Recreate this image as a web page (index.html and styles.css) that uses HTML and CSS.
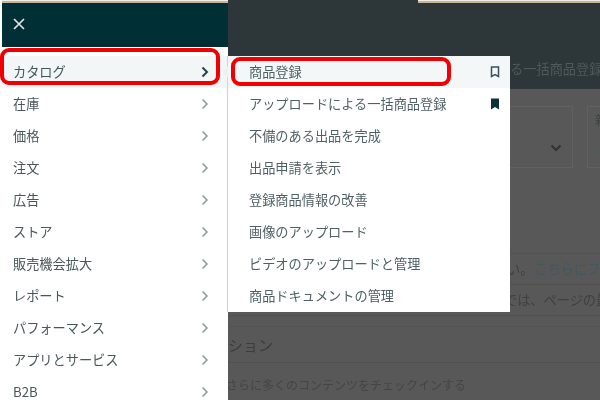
FILE: index.html
```html
<!DOCTYPE html>
<html lang="ja">
<head>
<meta charset="utf-8">
<title>カタログ</title>
<link rel="stylesheet" href="styles.css">
</head>
<body>
<div class="stage">
  <nav class="nav">
    <div class="strip"></div>
    <div class="nav-head">
      <svg class="close" width="12" height="12" viewBox="0 0 12 12"><path d="M1 1l10 10M11 1L1 11"/></svg>
    </div>
    <ul class="menu">
      <li class="row active">カタログ<svg class="chev" width="8" height="12" viewBox="0 0 8 12"><path d="M1.500 1.500L6 6l-4.500 4.500"/></svg></li>
      <li class="row">在庫<svg class="chev" width="8" height="12" viewBox="0 0 8 12"><path d="M1.500 1.500L6 6l-4.500 4.500"/></svg></li>
      <li class="row">価格<svg class="chev" width="8" height="12" viewBox="0 0 8 12"><path d="M1.500 1.500L6 6l-4.500 4.500"/></svg></li>
      <li class="row">注文<svg class="chev" width="8" height="12" viewBox="0 0 8 12"><path d="M1.500 1.500L6 6l-4.500 4.500"/></svg></li>
      <li class="row">広告<svg class="chev" width="8" height="12" viewBox="0 0 8 12"><path d="M1.500 1.500L6 6l-4.500 4.500"/></svg></li>
      <li class="row">ストア<svg class="chev" width="8" height="12" viewBox="0 0 8 12"><path d="M1.500 1.500L6 6l-4.500 4.500"/></svg></li>
      <li class="row">販売機会拡大<svg class="chev" width="8" height="12" viewBox="0 0 8 12"><path d="M1.500 1.500L6 6l-4.500 4.500"/></svg></li>
      <li class="row">レポート<svg class="chev" width="8" height="12" viewBox="0 0 8 12"><path d="M1.500 1.500L6 6l-4.500 4.500"/></svg></li>
      <li class="row">パフォーマンス<svg class="chev" width="8" height="12" viewBox="0 0 8 12"><path d="M1.500 1.500L6 6l-4.500 4.500"/></svg></li>
      <li class="row">アプリとサービス<svg class="chev" width="8" height="12" viewBox="0 0 8 12"><path d="M1.500 1.500L6 6l-4.500 4.500"/></svg></li>
      <li class="row">B2B<svg class="chev" width="8" height="12" viewBox="0 0 8 12"><path d="M1.500 1.500L6 6l-4.500 4.500"/></svg></li>
    </ul>
  </nav>

  <main class="page">
    <header class="page-head">
      <div class="strip strip-right"></div>
      <div class="page-title">アップロードによる一括商品登録</div>
    </header>
    <div class="page-body">
      <div class="cards">
        <div class="card card-a">
          <svg class="down" width="12" height="8" viewBox="0 0 12 8"><path d="M1.500 1.500L6 6l4.500-4.500"/></svg>
        </div>
        <div class="card card-b">
          <span class="card-label">新</span>
          <span class="card-ring"></span>
        </div>
      </div>
      <div class="notice"><span>い。</span><span class="link">こちらにフィードバック</span></div>
      <div class="notice notice-b">では、ページの最上部</div>
      <div class="thin"></div>
      <h2 class="section-title">ション</h2>
      <p class="section-text">さらに多くのコンテンツをチェックインする</p>
    </div>
  </main>

  <ul class="flyout">
    <li class="fly-row current">商品登録<svg class="mark" width="10" height="12" viewBox="0 0 10 12"><path class="mark-line" d="M1.500 1h7v9.500L5 8.500l-3.500 2z"/></svg></li>
    <li class="fly-row">アップロードによる一括商品登録<svg class="mark" width="10" height="12" viewBox="0 0 10 12"><path class="mark-fill" d="M1 .5h8v11L5 9l-4 2.500z"/></svg></li>
    <li class="fly-row">不備のある出品を完成</li>
    <li class="fly-row">出品申請を表示</li>
    <li class="fly-row">登録商品情報の改善</li>
    <li class="fly-row">画像のアップロード</li>
    <li class="fly-row">ビデオのアップロードと管理</li>
    <li class="fly-row">商品ドキュメントの管理</li>
  </ul>
  <span class="notch"></span>
  <div class="callout callout-nav"></div>
  <div class="callout callout-fly"></div>
</div>
</body>
</html>
```
FILE: styles.css
```css
* { box-sizing: border-box; }
html, body { margin: 0; padding: 0; }
body { width: 600px; height: 400px; overflow: hidden; background: #fff; }
ul { list-style: none; margin: 0; padding: 0; }

.stage {
  position: relative;
  display: grid;
  grid-template-columns: 228px 1fr;
  width: 600px;
  height: 400px;
  overflow: hidden;
  font: 400 13.2px/32px "Noto Sans CJK JP", "Noto Sans", sans-serif;
  filter: blur(0.35px);
}

.strip {
  height: 3px;
  margin-left: 2px;
  background: linear-gradient(#f4efe6 0 1px, #c6b59a 1px);
}
.strip-right { margin-left: 190px; }

/* main nav */
.nav { background: #fff; height: 400px; overflow: hidden; color: #4a5659; position: relative; z-index: 2; }
.nav-head {
  display: flex;
  align-items: center;
  height: 44px;
  margin: 0 0 9px 2px;
  padding: 0 0 3px 11px;
  background: #002f36;
}
.close { fill: none; stroke: #e4eaea; stroke-width: 1.6; }
.row {
  display: flex;
  align-items: center;
  justify-content: space-between;
  height: 32px;
  padding: 0 19px 0 13px;
}
.row.active { background: #f3f6f6; color: #44565a; }
.chev { fill: none; stroke: #8c9797; stroke-width: 1.5; }
.active .chev { stroke: #274449; stroke-width: 2; }

/* dimmed page */
.page { display: flex; flex-direction: column; height: 400px; overflow: hidden; background: #585858; }
.page-head { height: 89px; background: #2d3638; flex: none; overflow: hidden; }
.page-title {
  margin: 50px 0 0 177px;
  white-space: nowrap;
  line-height: 32px;
  color: #50595b;
}
.page-body { color: #3e4142; line-height: 20px; }
.cards { display: flex; gap: 14px; height: 62px; margin: 17px 0 85px 172px; }
.card { flex: none; position: relative; border: 1px solid #616161; }
.card-a { width: 173px; display: flex; align-items: flex-end; justify-content: flex-end; padding: 0 10px 15px 0; }
.card-b { width: 120px; padding: 3px 0 0 7px; display: flex; flex-direction: column; gap: 4px; align-items: flex-start; }
.card-label { font-size: 12px; }
.card-ring { width: 14px; height: 20px; border: 1.5px solid #4c5c5e; border-radius: 7px; }
.down { fill: none; stroke: #2f3334; stroke-width: 2; }

.notice {
  height: 31px;
  padding: 0 0 0 279px;
  border-top: 1px solid #525252;
  line-height: 30px;
  white-space: nowrap;
}
.notice-b { height: 32px; padding-left: 276px; border-bottom: 1px solid #525252; }
.link { color: #3f5a5f; margin-left: 1px; }
.thin { height: 11px; border-bottom: 1px solid #535353; }
.section-title {
  margin: 0;
  height: 36px;
  border-bottom: 1px solid #515151;
  font-size: 15px;
  font-weight: 400;
  line-height: 36px;
  color: #3a3c3d;
}
.section-text { margin: 12px 0 0 -2px; font-size: 12px; white-space: nowrap; color: #434546; }

/* flyout */
.flyout {
  position: absolute;
  left: 227px;
  top: 56px;
  width: 283px;
  height: 256px;
  background: #fff;
  border-left: 1px solid #cfd3d3;
  color: #4f6064;
  z-index: 3;
}
.fly-row {
  display: flex;
  align-items: center;
  justify-content: space-between;
  height: 32px;
  padding: 0 10px 0 21px;
}
.fly-row.current { background: #f3f7f8; }
.mark { display: block; }
.mark-line { fill: none; stroke: #3a5257; stroke-width: 1.5; }
.mark-fill { fill: #0c3139; }

.notch {
  position: absolute;
  left: 222px;
  top: 66px;
  border: 6px solid transparent;
  border-left: 0;
  border-right-color: #eef1f1;
  z-index: 4;
}

/* red annotation boxes */
.callout { position: absolute; border: 4px solid #f00000; border-radius: 9px; z-index: 5; }
.callout-nav { left: 0; top: 48px; width: 220px; height: 37px; }
.callout-fly { left: 231px; top: 57px; width: 220px; height: 29px; }
```
